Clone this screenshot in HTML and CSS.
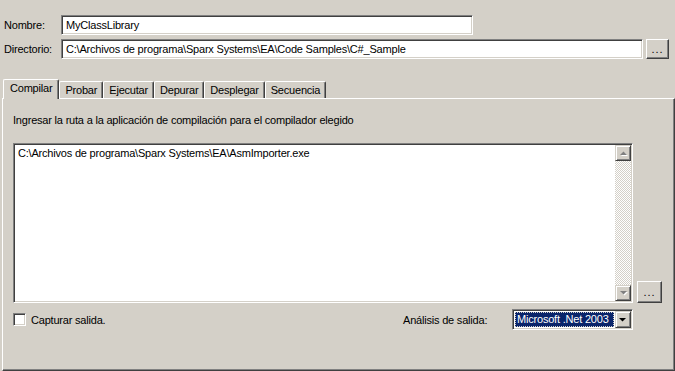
FILE: index.html
```html
<!DOCTYPE html>
<html>
<head>
    <title>Propiedades del proyecto</title>
    <meta charset="UTF-8">
    <link rel="stylesheet" href="styles.css">
</head>
<body>
    <div class="dialog">
        <div class="field-row">
            <label class="field-label">Nombre:</label>
            <div class="edit name">MyClassLibrary</div>
        </div>
        <div class="field-row">
            <label class="field-label">Directorio:</label>
            <div class="edit dir">C:\Archivos de programa\Sparx Systems\EA\Code Samples\C#_Sample</div>
            <button class="btn dots">...</button>
        </div>

        <div class="tabs">
            <div class="tab active">Compilar</div>
            <div class="tab">Probar</div>
            <div class="tab">Ejecutar</div>
            <div class="tab">Depurar</div>
            <div class="tab">Desplegar</div>
            <div class="tab">Secuencia</div>
        </div>

        <div class="panel">
            <div class="hint">Ingresar la ruta a la aplicación de compilación para el compilador elegido</div>

            <div class="editor-row">
                <div class="editor">
                    <div class="editor-text">C:\Archivos de programa\Sparx Systems\EA\AsmImporter.exe</div>
                    <div class="vscroll">
                        <div class="scroll-btn">
                            <svg width="16" height="16" viewBox="0 0 16 16">
                                <polygon points="5,10 12,10 8.5,6.5" fill="#fff" transform="translate(1,1)"/>
                                <polygon points="5,10 12,10 8.5,6.5" fill="#808080"/>
                            </svg>
                        </div>
                        <div class="scroll-track"></div>
                        <div class="scroll-btn">
                            <svg width="16" height="16" viewBox="0 0 16 16">
                                <polygon points="5,6 12,6 8.5,9.5" fill="#fff" transform="translate(1,1)"/>
                                <polygon points="5,6 12,6 8.5,9.5" fill="#808080"/>
                            </svg>
                        </div>
                    </div>
                </div>
                <button class="btn browse">...</button>
            </div>

            <div class="options-row">
                <label class="check">
                    <span class="checkbox"></span>
                    Capturar salida.
                </label>
                <div class="parser">
                    <span class="parser-label">Análisis de salida:</span>
                    <div class="combo">
                        <div class="combo-value"><span>Microsoft .Net 2003</span></div>
                        <div class="combo-btn">
                            <svg width="16" height="17" viewBox="0 0 16 17">
                                <polygon points="4,7 11,7 7.5,10.5" fill="#000"/>
                            </svg>
                        </div>
                    </div>
                </div>
            </div>
        </div>
    </div>
</body>
</html>
```

FILE: styles.css
```css
body {
    margin: 0;
    width: 675px;
    height: 371px;
    overflow: hidden;
    background: #d4d0c8;
    color: #000;
    font-family: "Liberation Sans", Tahoma, sans-serif;
    font-size: 11px;
    letter-spacing: -0.2px;
}
.dialog {
    padding-top: 15px;
}
.field-row {
    display: flex;
    align-items: center;
    height: 20px;
    margin-bottom: 4px;
}
.field-label {
    width: 61px;
    padding-left: 4px;
    box-sizing: border-box;
}
.edit {
    height: 20px;
    box-sizing: border-box;
    background: #fff;
    border: 1px solid;
    border-color: #808080 #fff #fff #808080;
    box-shadow: inset 1px 1px #404040, inset -1px -1px #d4d0c8;
    padding: 0 4px;
    line-height: 18px;
    white-space: nowrap;
    overflow: hidden;
}
.name {
    width: 412px;
}
.dir {
    width: 582px;
}
.btn {
    box-sizing: border-box;
    padding: 0;
    background: #d4d0c8;
    border: 1px solid;
    border-color: #fff #404040 #404040 #fff;
    box-shadow: inset -1px -1px #808080;
    font: inherit;
    letter-spacing: 1px;
    line-height: 14px;
    color: #000;
}
.dots {
    margin-left: 3px;
    width: 23px;
    height: 20px;
}

/* tabs */
.tabs {
    display: flex;
    align-items: flex-end;
    height: 20px;
    margin: 20px 0 -1px 3px;
    position: relative;
    z-index: 1;
}
.tab {
    height: 17px;
    box-sizing: border-box;
    margin-bottom: 1px;
    padding: 0 5px;
    line-height: 16px;
    background: #d4d0c8;
    border: 1px solid;
    border-bottom: none;
    border-color: #fff #404040 #404040 #fff;
    box-shadow: inset -1px 0 #808080;
    border-radius: 2px 2px 0 0;
}
.tab.active {
    height: 20px;
    margin-bottom: 0;
    padding: 0 6px;
    line-height: 17px;
}
.panel {
    width: 673px;
    height: 273px;
    margin-left: 2px;
    box-sizing: border-box;
    border: 1px solid;
    border-color: #fff #404040 #404040 #fff;
    box-shadow: inset -1px -1px #808080;
    padding: 15px 0 0 10px;
}
.hint {
    height: 13px;
    line-height: 13px;
}

/* compiler path */
.editor-row {
    display: flex;
    align-items: flex-end;
    margin-top: 16px;
}
.editor {
    display: flex;
    width: 620px;
    height: 160px;
    box-sizing: border-box;
    background: #fff;
    border: 1px solid;
    border-color: #808080 #fff #fff #808080;
    box-shadow: inset 1px 1px #404040, inset -1px -1px #d4d0c8;
    padding: 1px;
}
.editor-text {
    flex: 1;
    padding: 2px 3px;
    line-height: 13px;
}
.vscroll {
    width: 16px;
    display: flex;
    flex-direction: column;
}
.scroll-btn {
    width: 16px;
    height: 16px;
    box-sizing: border-box;
    background: #d4d0c8;
    border: 1px solid;
    border-color: #d4d0c8 #404040 #404040 #d4d0c8;
    box-shadow: inset 1px 1px #fff, inset -1px -1px #808080;
}
.scroll-btn svg {
    display: block;
    margin: -1px;
}
.scroll-track {
    flex: 1;
    background: repeating-conic-gradient(#fff 0 25%, #d4d0c8 0 50%) 0 0 / 2px 2px;
}
.browse {
    width: 25px;
    height: 22px;
    margin-left: 4px;
}

/* bottom options */
.options-row {
    display: flex;
    align-items: center;
    justify-content: space-between;
    width: 620px;
    height: 21px;
    margin-top: 6px;
}
.check {
    display: flex;
    align-items: center;
    gap: 5px;
}
.checkbox {
    width: 13px;
    height: 13px;
    box-sizing: border-box;
    background: #fff;
    border: 1px solid;
    border-color: #808080 #fff #fff #808080;
    box-shadow: inset 1px 1px #404040, inset -1px -1px #d4d0c8;
}
.parser {
    display: flex;
    align-items: center;
}
.parser-label {
    width: 109px;
}
.combo {
    display: flex;
    width: 121px;
    height: 21px;
    box-sizing: border-box;
    background: #fff;
    border: 1px solid;
    border-color: #808080 #fff #fff #808080;
    box-shadow: inset 1px 1px #404040, inset -1px -1px #d4d0c8;
    padding: 2px 1px 2px 2px;
}
.combo-value {
    flex: 1;
    padding-right: 1px;
}
.combo-value span {
    display: block;
    height: 15px;
    box-sizing: border-box;
    background: #0a246a;
    color: #fff;
    border: 1px dotted #d4d0c8;
    line-height: 13px;
    padding-left: 1px;
    white-space: nowrap;
    overflow: hidden;
}
.combo-btn {
    width: 16px;
    height: 17px;
    margin-top: -1px;
    box-sizing: border-box;
    background: #d4d0c8;
    border: 1px solid;
    border-color: #d4d0c8 #404040 #404040 #d4d0c8;
    box-shadow: inset 1px 1px #fff, inset -1px -1px #808080;
}
.combo-btn svg {
    display: block;
    margin: -1px;
}
```
